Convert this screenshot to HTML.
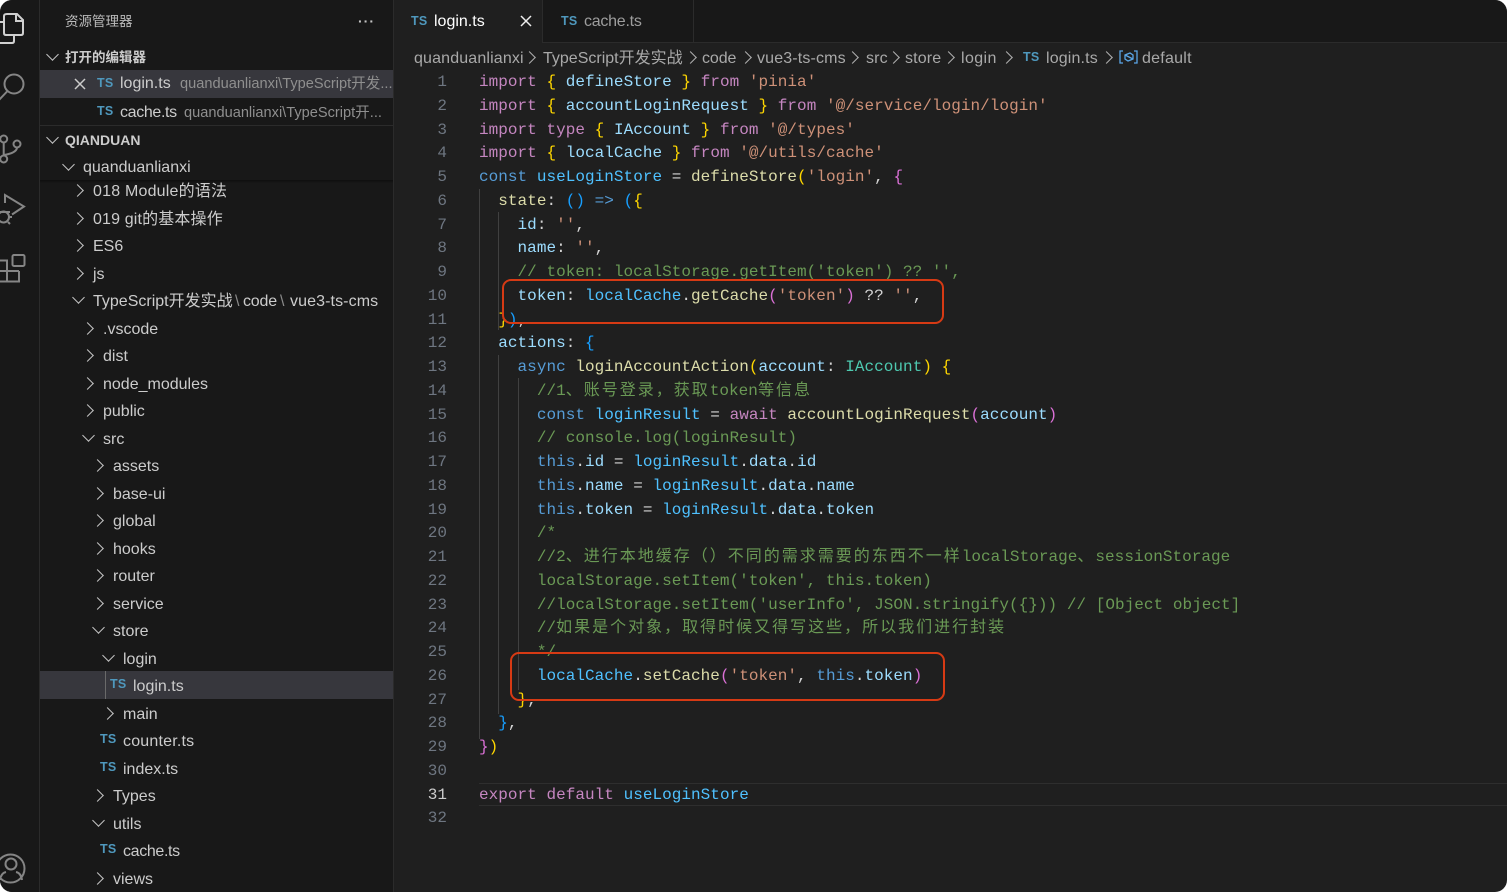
<!DOCTYPE html>
<html lang="zh"><head><meta charset="utf-8"><title>login.ts</title>
<style>
html,body{margin:0;padding:0;background:#fff;width:1507px;height:892px;overflow:hidden}
#app{position:absolute;left:0;top:0;width:1507px;height:892px;background:#1f1f1f;border-radius:12px;overflow:hidden;font-family:"Liberation Sans","Noto Sans CJK SC",sans-serif;font-size:16px;color:#ccc}
#act{position:absolute;left:0;top:0;width:39px;height:892px;background:#181818;border-right:1px solid #2b2b2b}
#side{position:absolute;left:40px;top:0;width:353px;height:892px;background:#181818;border-right:1px solid #2b2b2b;overflow:hidden}
#tabs{position:absolute;left:394px;top:0;width:1113px;height:42px;background:#181818;border-bottom:1px solid #2b2b2b}
.r,.c,.n,.b{position:absolute;white-space:pre}
.r{height:28px;line-height:28px;margin-top:3px}
.s{color:#8f8f8f;font-size:14.6px}
.ts{position:absolute;font:bold 12.5px/14px "Liberation Sans",sans-serif;color:#4f98bd;letter-spacing:.2px}
.cr,.cd{position:absolute;width:9px;height:9px;border-top:1.3px solid #c5c5c5;border-right:1.3px solid #c5c5c5;box-sizing:border-box}
.cr{transform:rotate(45deg);margin-left:-2.5px;margin-top:-.5px}
.cd{transform:rotate(135deg);margin-left:-1.5px;margin-top:-2.5px}
.h{position:absolute;left:40px;width:353px;height:28px;background:#37373d}
.c{left:479px;height:24px;line-height:24px;font-family:"Liberation Mono","Noto Sans CJK SC",monospace;font-size:16px;color:#d4d4d4;margin-top:1px;letter-spacing:.035px}
.n{left:410px;width:37px;text-align:right;height:24px;line-height:24px;font-family:"Liberation Mono",monospace;font-size:16px;color:#6e7681;margin-top:1px}
.g{position:absolute;width:1px;background:#404040}
.k{color:#c586c0}.v{color:#9cdcfe}.u{color:#4fc1ff}.f{color:#dcdcaa}.t{color:#ce9178}.m{color:#6a9955}.w{color:#569cd6}.y{color:#4ec9b0}
.b1{color:#ffd700}.b2{color:#da70d6}.b3{color:#179fff}.z{letter-spacing:2px}
.b{top:45px;height:28px;line-height:28px;color:#a9a9a9;letter-spacing:.15px}
.bc{position:absolute;top:52.5px;width:9px;height:9px;border-top:1.3px solid #b0b0b0;border-right:1.3px solid #b0b0b0;box-sizing:border-box;transform:rotate(45deg)}
.box{position:absolute;border:2px solid #d63a14;border-radius:9px;box-sizing:border-box}
</style></head><body><div id="app">

<div id="act">
<svg width="39" height="892" style="position:absolute;left:0;top:0" fill="none" stroke="#858585" stroke-width="2">
<g stroke="#d0d0d0">
<path d="M7 14H17L23 20V33Q23 35 21 35H6Q4 35 4 33V16Q4 14 7 14Z"/>
<path d="M16 14V21H23"/>
<path d="M0 22H4M0 43H12Q14 43 14 41V35"/>
</g>
<circle cx="14" cy="84" r="9.5"/><path d="M7.5 91L-1 100"/>
<circle cx="3.7" cy="139" r="3.5"/><circle cx="17" cy="144" r="3.5"/><circle cx="3.7" cy="159" r="3.5"/>
<path d="M3.7 143V155M17 148Q16 153 4 155"/>
<path d="M5 203V195L24 206.5L12 214.5"/>
<circle cx="3.5" cy="217" r="5.5"/><path d="M-2 212H10M9 217H12M8 222L10 224"/>
<rect x="12.5" y="255" width="12" height="11" rx="1.5"/>
<path d="M0 260.500H7V281.500H0M0 271H19M19 271V281.500H7"/>
<circle cx="10.500" cy="868.500" r="14"/><circle cx="11" cy="864" r="5.500"/>
<path d="M0 880Q1 873 6 872M16 872Q21 873 22 880"/>
</svg>
</div>

<div id="side"></div>
<div class="h" style="top:70px"></div>
<div class="g" style="left:40px;top:125px;width:353px;height:1px;background:#2b2b2b"></div>
<div class="g" style="left:40px;top:180px;width:353px;height:3px;background:linear-gradient(#0e0e0e,#181818)"></div>

<div class="r" style="left:65px;top:5px;font-size:13.500px;color:#bbb">资源管理器</div>
<div class="r" style="left:358px;top:4px;font-size:14px;font-weight:bold;letter-spacing:1px;color:#c5c5c5">···</div>

<i class="cd" style="left:49px;top:52px"></i><div class="r" style="left:65px;top:41px;font-size:13.500px;font-weight:bold">打开的编辑器</div>
<svg width="12" height="12" style="position:absolute;left:74px;top:78px" fill="none" stroke="#ccc" stroke-width="1.500"><path d="M1 1L11 11M11 1L1 11"/></svg>
<span class="ts" style="left:97px;top:76px">TS</span><div class="r" style="left:120px;top:67px;width:273px;overflow:hidden">login.ts<span style="position:absolute;left:60px;top:0" class="s">quanduanlianxi\TypeScript开发...</span></div>
<span class="ts" style="left:97px;top:104px">TS</span><div class="r" style="left:120px;top:96px;width:273px;overflow:hidden"><span style="letter-spacing:-.35px">cache.ts</span><span style="position:absolute;left:64px;top:0" class="s">quanduanlianxi\TypeScript开...</span></div>

<i class="cd" style="left:49px;top:135px"></i><div class="r" style="left:65px;top:123px;font-size:14px;font-weight:bold">QIANDUAN</div>
<i class="cd" style="left:65px;top:162px"></i><div class="r" style="left:83px;top:151px">quanduanlianxi</div>

<i class="cr" style="left:75px;top:186px"></i><div class="r" style="left:93px;top:175px;letter-spacing:.2px">018 Module的语法</div>
<i class="cr" style="left:75px;top:214px"></i><div class="r" style="left:93px;top:203px;letter-spacing:.15px">019 git的基本操作</div>
<i class="cr" style="left:75px;top:241px"></i><div class="r" style="left:93px;top:230px">ES6</div>
<i class="cr" style="left:75px;top:269px"></i><div class="r" style="left:93px;top:258px">js</div>
<i class="cd" style="left:75px;top:295px"></i><div class="r" style="left:93px;top:285px">TypeScript开发实战</div><div class="r" style="left:235px;top:285px;color:#8a8a8a">\</div><div class="r" style="left:243px;top:285px;letter-spacing:-.2px">code</div><div class="r" style="left:280px;top:285px;color:#8a8a8a">\</div><div class="r" style="left:290px;top:285px;letter-spacing:.1px">vue3-ts-cms</div>
<i class="cr" style="left:85px;top:324px"></i><div class="r" style="left:103px;top:313px">.vscode</div>
<i class="cr" style="left:85px;top:351px"></i><div class="r" style="left:103px;top:340px">dist</div>
<i class="cr" style="left:85px;top:379px"></i><div class="r" style="left:103px;top:368px">node_modules</div>
<i class="cr" style="left:85px;top:406px"></i><div class="r" style="left:103px;top:395px">public</div>
<i class="cd" style="left:85px;top:433px"></i><div class="r" style="left:103px;top:423px">src</div>
<i class="cr" style="left:95px;top:461px"></i><div class="r" style="left:113px;top:450px">assets</div>
<i class="cr" style="left:95px;top:489px"></i><div class="r" style="left:113px;top:478px">base-ui</div>
<i class="cr" style="left:95px;top:516px"></i><div class="r" style="left:113px;top:505px">global</div>
<i class="cr" style="left:95px;top:544px"></i><div class="r" style="left:113px;top:533px">hooks</div>
<i class="cr" style="left:95px;top:571px"></i><div class="r" style="left:113px;top:560px">router</div>
<i class="cr" style="left:95px;top:599px"></i><div class="r" style="left:113px;top:588px">service</div>
<i class="cd" style="left:95px;top:625px"></i><div class="r" style="left:113px;top:615px">store</div>
<i class="cd" style="left:105px;top:653px"></i><div class="r" style="left:123px;top:643px">login</div>
<div class="h" style="top:671px"></div><div class="g" style="left:105px;top:671px;height:28px;background:#6a6a6a"></div>
<span class="ts" style="left:110px;top:677px">TS</span><div class="r" style="left:133px;top:670px">login.ts</div>
<i class="cr" style="left:105px;top:709px"></i><div class="r" style="left:123px;top:698px">main</div>
<span class="ts" style="left:100px;top:732px">TS</span><div class="r" style="left:123px;top:725px;letter-spacing:.2px">counter.ts</div>
<span class="ts" style="left:100px;top:760px">TS</span><div class="r" style="left:123px;top:753px">index.ts</div>
<i class="cr" style="left:95px;top:791px"></i><div class="r" style="left:113px;top:780px">Types</div>
<i class="cd" style="left:95px;top:818px"></i><div class="r" style="left:113px;top:808px">utils</div>
<span class="ts" style="left:100px;top:842px">TS</span><div class="r" style="left:123px;top:835px;letter-spacing:-.35px">cache.ts</div>
<i class="cr" style="left:95px;top:874px"></i><div class="r" style="left:113px;top:863px">views</div>

<div id="tabs"></div>
<div style="position:absolute;left:394px;top:0;width:149px;height:43px;background:#1f1f1f;border-right:1px solid #2b2b2b;box-sizing:border-box"></div>
<div class="g" style="left:693px;top:0;height:42px;background:#2b2b2b"></div>
<span class="ts" style="left:411px;top:14px">TS</span><div class="r" style="left:434px;top:5px;color:#fff;margin-top:3px">login.ts</div>
<svg width="12" height="12" style="position:absolute;left:520px;top:15px" fill="none" stroke="#eee" stroke-width="1.500"><path d="M1 1L11 11M11 1L1 11"/></svg>
<span class="ts" style="left:561px;top:14px">TS</span><div class="r" style="left:584px;top:5px;color:#9d9d9d;letter-spacing:-.25px">cache.ts</div>

<div class="b" style="left:414px">quanduanlianxi</div><i class="bc" style="left:525px"></i>
<div class="b" style="left:543px;letter-spacing:0">TypeScript开发实战</div><i class="bc" style="left:685.5px"></i>
<div class="b" style="left:702px;letter-spacing:-.1px">code</div><i class="bc" style="left:741px"></i>
<div class="b" style="left:757px">vue3-ts-cms</div><i class="bc" style="left:847.5px"></i>
<div class="b" style="left:866px">src</div><i class="bc" style="left:888.5px"></i>
<div class="b" style="left:905px">store</div><i class="bc" style="left:943.5px"></i>
<div class="b" style="left:961px;letter-spacing:.4px">login</div><i class="bc" style="left:1001.5px"></i>
<span class="ts" style="left:1023px;top:50px">TS</span>
<div class="b" style="left:1046px">login.ts</div><i class="bc" style="left:1101.5px"></i>
<svg width="19" height="14" style="position:absolute;left:1119px;top:50px" fill="none" stroke="#5aa5e6" stroke-width="1.300"><path d="M4 1H1V13H4M15 1H18V13H15"/><path d="M6 5L11 3L14 5V9L9 11L6 9ZM6 5L14 9"/></svg>
<div class="b" style="left:1142px;letter-spacing:.25px">default</div>

<div class="g" style="left:479px;top:189px;height:550px"></div>
<div class="g" style="left:498px;top:212px;height:118px"></div>
<div class="g" style="left:498px;top:355px;height:359px"></div>
<div class="g" style="left:518px;top:378px;height:312px"></div>
<div style="position:absolute;left:479px;top:783px;width:1028px;height:21px;border-top:1px solid #2e2e2e;border-bottom:1px solid #2e2e2e;box-sizing:content-box"></div>

<div class="n" style="top:69px">1</div><div class="c" style="top:69px"><span class="k">import</span> <span class="b1">{</span> <span class="v">defineStore</span> <span class="b1">}</span> <span class="k">from</span> <span class="t">'pinia'</span></div>
<div class="n" style="top:93px">2</div><div class="c" style="top:93px"><span class="k">import</span> <span class="b1">{</span> <span class="v">accountLoginRequest</span> <span class="b1">}</span> <span class="k">from</span> <span class="t">'@/service/login/login'</span></div>
<div class="n" style="top:117px">3</div><div class="c" style="top:117px"><span class="k">import</span> <span class="k">type</span> <span class="b1">{</span> <span class="v">IAccount</span> <span class="b1">}</span> <span class="k">from</span> <span class="t">'@/types'</span></div>
<div class="n" style="top:140px">4</div><div class="c" style="top:140px"><span class="k">import</span> <span class="b1">{</span> <span class="v">localCache</span> <span class="b1">}</span> <span class="k">from</span> <span class="t">'@/utils/cache'</span></div>
<div class="n" style="top:164px">5</div><div class="c" style="top:164px"><span class="w">const</span> <span class="u">useLoginStore</span> = <span class="f">defineStore</span><span class="b1">(</span><span class="t">'login'</span>, <span class="b2">{</span></div>
<div class="n" style="top:188px">6</div><div class="c" style="top:188px">  <span class="f">state</span>: <span class="b3">()</span> <span class="w">=&gt;</span> <span class="b3">(</span><span class="b1">{</span></div>
<div class="n" style="top:212px">7</div><div class="c" style="top:212px">    <span class="v">id</span>: <span class="t">''</span>,</div>
<div class="n" style="top:235px">8</div><div class="c" style="top:235px">    <span class="v">name</span>: <span class="t">''</span>,</div>
<div class="n" style="top:259px">9</div><div class="c" style="top:259px">    <span class="m">// token: localStorage.getItem('token') ?? '',</span></div>
<div class="n" style="top:283px">10</div><div class="c" style="top:283px">    <span class="v">token</span>: <span class="u">localCache</span>.<span class="f">getCache</span><span class="b2">(</span><span class="t">'token'</span><span class="b2">)</span> ?? <span class="t">''</span>,</div>
<div class="n" style="top:307px">11</div><div class="c" style="top:307px">  <span class="b1">}</span><span class="b3">)</span>,</div>
<div class="n" style="top:330px">12</div><div class="c" style="top:330px">  <span class="v">actions</span>: <span class="b3">{</span></div>
<div class="n" style="top:354px">13</div><div class="c" style="top:354px">    <span class="w">async</span> <span class="f">loginAccountAction</span><span class="b1">(</span><span class="v">account</span>: <span class="y">IAccount</span><span class="b1">)</span> <span class="b1">{</span></div>
<div class="n" style="top:378px">14</div><div class="c m" style="top:378px">      //1<span class="z">、账号登录，获取</span>token<span class="z">等信息</span></div>
<div class="n" style="top:402px">15</div><div class="c" style="top:402px">      <span class="w">const</span> <span class="u">loginResult</span> = <span class="k">await</span> <span class="f">accountLoginRequest</span><span class="b2">(</span><span class="v">account</span><span class="b2">)</span></div>
<div class="n" style="top:425px">16</div><div class="c m" style="top:425px">      // console.log(loginResult)</div>
<div class="n" style="top:449px">17</div><div class="c" style="top:449px">      <span class="w">this</span>.<span class="v">id</span> = <span class="u">loginResult</span>.<span class="v">data</span>.<span class="v">id</span></div>
<div class="n" style="top:473px">18</div><div class="c" style="top:473px">      <span class="w">this</span>.<span class="v">name</span> = <span class="u">loginResult</span>.<span class="v">data</span>.<span class="v">name</span></div>
<div class="n" style="top:497px">19</div><div class="c" style="top:497px">      <span class="w">this</span>.<span class="v">token</span> = <span class="u">loginResult</span>.<span class="v">data</span>.<span class="v">token</span></div>
<div class="n" style="top:520px">20</div><div class="c m" style="top:520px">      /*</div>
<div class="n" style="top:544px">21</div><div class="c m" style="top:544px">      //2<span class="z">、进行本地缓存（）不同的需求需要的东西不一样</span>localStorage<span class="z">、</span>sessionStorage</div>
<div class="n" style="top:568px">22</div><div class="c m" style="top:568px">      localStorage.setItem('token', this.token)</div>
<div class="n" style="top:592px">23</div><div class="c m" style="top:592px">      //localStorage.setItem('userInfo', JSON.stringify({})) // [Object object]</div>
<div class="n" style="top:615px">24</div><div class="c m" style="top:615px">      //<span class="z">如果是个对象，取得时候又得写这些，所以我们进行封装</span></div>
<div class="n" style="top:639px">25</div><div class="c m" style="top:639px">      */</div>
<div class="n" style="top:663px">26</div><div class="c" style="top:663px">      <span class="u">localCache</span>.<span class="f">setCache</span><span class="b2">(</span><span class="t">'token'</span>, <span class="w">this</span>.<span class="v">token</span><span class="b2">)</span></div>
<div class="n" style="top:687px">27</div><div class="c" style="top:687px">    <span class="b1">}</span>,</div>
<div class="n" style="top:710px">28</div><div class="c" style="top:710px">  <span class="b3">}</span>,</div>
<div class="n" style="top:734px">29</div><div class="c" style="top:734px"><span class="b2">}</span><span class="b1">)</span></div>
<div class="n" style="top:758px">30</div>
<div class="n" style="top:782px;color:#ccc">31</div><div class="c" style="top:782px"><span class="k">export</span> <span class="k">default</span> <span class="u">useLoginStore</span></div>
<div class="n" style="top:805px">32</div>

<div class="box" style="left:502px;top:279px;width:442px;height:45px"></div>
<div class="box" style="left:510px;top:652px;width:435px;height:49px"></div>
</div></body></html>
